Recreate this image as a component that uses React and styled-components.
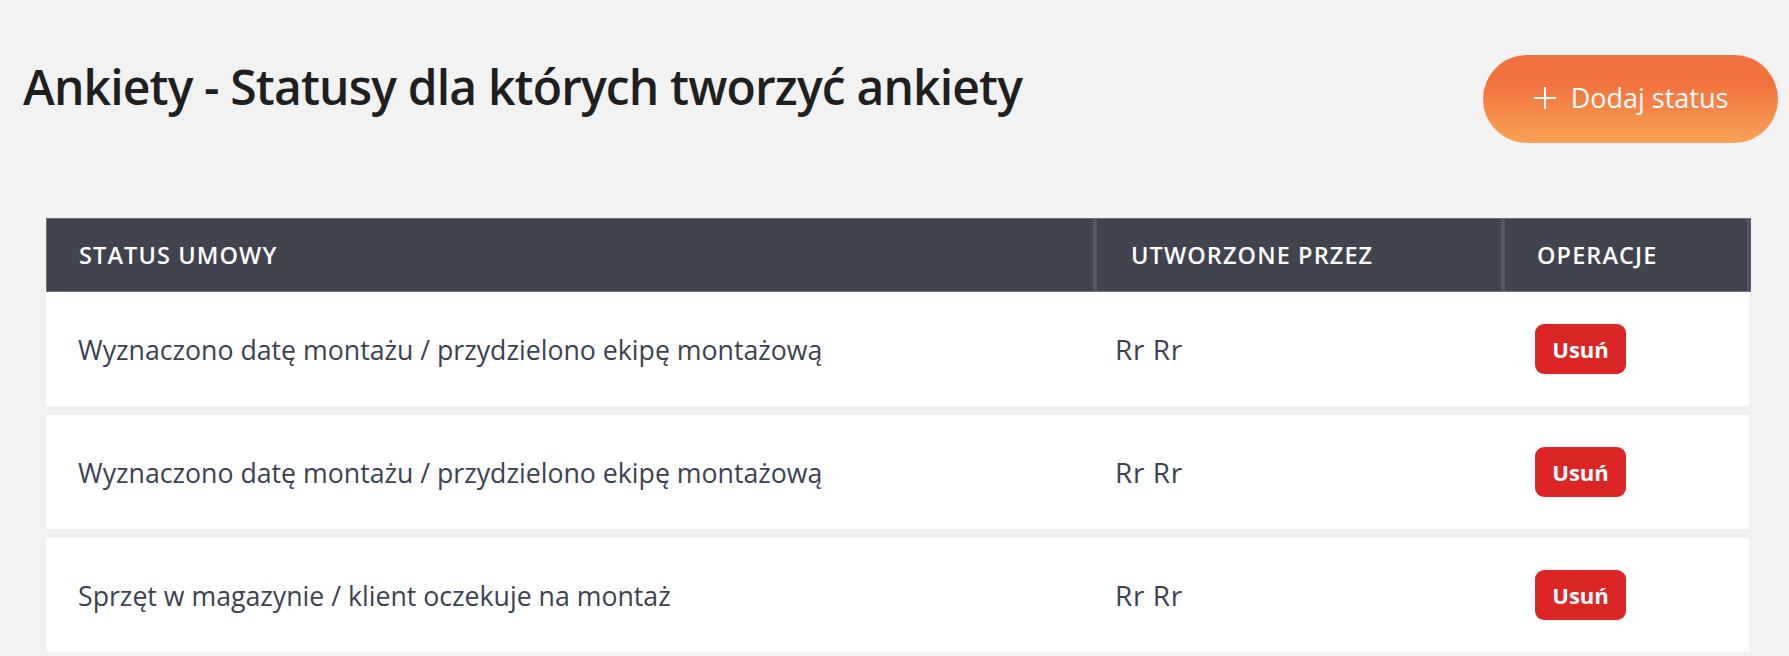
import React from "react";
import styled, { createGlobalStyle } from "styled-components";

const Global = createGlobalStyle`
  html, body { margin: 0; padding: 0; background: #f2f2f2; }
  body { font-family: "Open Sans", "Noto Sans", Arial, sans-serif; }
  * { box-sizing: border-box; }
`;

const Page = styled.div`
  min-height: 656px;
  padding: 55px 11px 0 23px;
  background: #f2f2f2;
`;

const TopBar = styled.div`
  display: flex;
  justify-content: space-between;
  align-items: flex-start;
`;

const Title = styled.h1`
  margin: 0;
  padding-top: 4px;
  font-size: 48px;
  line-height: 56px;
  font-weight: 600;
  color: #1f1f21;
  letter-spacing: -0.85px;
`;

const AddButton = styled.button`
  display: flex;
  align-items: center;
  justify-content: center;
  gap: 14px;
  width: 295px;
  height: 88px;
  border: none;
  border-radius: 44px;
  background: linear-gradient(to bottom, #f2703f 0%, #f3743f 35%, #f8a357 100%);
  color: #fff;
  font-family: inherit;
  font-size: 27px;
  font-weight: 400;
  cursor: pointer;
  padding: 0 0 3px 0;
`;

const Table = styled.div`
  margin: 75px 27px 0 23px;
  display: flex;
  flex-direction: column;
`;

const Body = styled.div`
  display: flex;
  flex-direction: column;
  gap: 9px;
`;

const cols = "1050px 408px 1fr";

const HeadRow = styled.div`
  display: grid;
  grid-template-columns: ${cols};
  height: 74px;
  background: #41434f;
  border: 1px solid #6e707a;
  border-right: none;
`;

const HeadCell = styled.div`
  display: flex;
  align-items: center;
  padding-left: ${(p) => p.$pad}px;
  color: #fff;
  font-size: 23.5px;
  font-weight: 600;
  letter-spacing: 1.1px;
  text-transform: uppercase;
  border-right: ${(p) => (p.$sep ? "4px solid #535667" : "none")};
`;

const Row = styled.div`
  display: grid;
  grid-template-columns: ${cols};
  height: 114px;
  background: #fff;
  margin-right: 2px;
`;

const Cell = styled.div`
  display: flex;
  align-items: center;
  padding-left: ${(p) => p.$pad}px;
  color: #3b4252;
  font-size: ${(p) => p.$size || 26.7}px;
  font-weight: 400;
  letter-spacing: ${(p) => p.$ls || 0}px;
`;

const DeleteButton = styled.button`
  width: 91px;
  height: 50px;
  border: none;
  border-radius: 9px;
  background: #dc2626;
  color: #fff;
  font-family: inherit;
  font-size: 22px;
  font-weight: 700;
  cursor: pointer;
  padding: 0;
`;

const rows = [
  { status: "Wyznaczono datę montażu / przydzielono ekipę montażową", by: "Rr Rr" },
  { status: "Wyznaczono datę montażu / przydzielono ekipę montażową", by: "Rr Rr" },
  { status: "Sprzęt w magazynie / klient oczekuje na montaż", by: "Rr Rr" },
];

const PlusIcon = () => (
  <svg width="24" height="24" viewBox="0 0 24 24" fill="none" stroke="#fff" strokeWidth="2">
    <path d="M12 1v22M1 12h22" />
  </svg>
);

export default function App() {
  return (
    <>
      <Global />
      <Page>
        <TopBar>
          <Title>Ankiety - Statusy dla których tworzyć ankiety</Title>
          <AddButton>
            <PlusIcon />
            <span>Dodaj status</span>
          </AddButton>
        </TopBar>
        <Table>
          <HeadRow>
            <HeadCell $pad={32} $sep>Status umowy</HeadCell>
            <HeadCell $pad={34} $sep>Utworzone przez</HeadCell>
            <HeadCell $pad={32} $sep>Operacje</HeadCell>
          </HeadRow>
          <Body>
            {rows.map((r, i) => (
              <Row key={i}>
                <Cell $pad={32}>{r.status}</Cell>
                <Cell $pad={19} $size={28} $ls={0.6}>{r.by}</Cell>
                <Cell $pad={31}>
                  <DeleteButton>Usuń</DeleteButton>
                </Cell>
              </Row>
            ))}
          </Body>
        </Table>
      </Page>
    </>
  );
}
